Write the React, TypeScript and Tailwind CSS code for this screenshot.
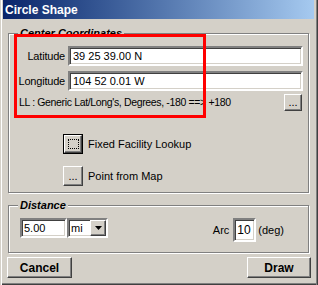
import React from 'react';

const font = { fontFamily: '"Liberation Sans", Arial, sans-serif' };

const sunken =
    'bg-white border-2 border-t-[#808080] border-l-[#808080] border-r-white border-b-white shadow-[inset_1px_1px_0_#404040,inset_-1px_-1px_0_#d4d0c8]';

const raised =
    'bg-[#d4d0c8] border border-t-white border-l-white border-r-[#404040] border-b-[#404040] shadow-[inset_-1px_-1px_0_#808080]';

const GroupBox: React.FC<{ title: string; className?: string; children: React.ReactNode }> = ({ title, className, children }) => (
    <div className={`relative border border-[#808080] shadow-[inset_1px_1px_0_#ffffff,1px_1px_0_#ffffff] ${className ?? ''}`}>
        <span className="absolute -top-[8px] left-[9px] px-[2px] bg-[#d4d0c8] text-[11px] font-bold italic leading-[14px] text-black">
            {title}
        </span>
        {children}
    </div>
);

export default function App() {
    return (
        <div
            style={font}
            className="relative w-[318px] h-[285px] bg-[#d4d0c8] flex flex-col pl-[3px] pr-[4px] pb-[4px] text-[11px] text-black shadow-[inset_1px_0_0_#d4d0c8,inset_2px_0_0_#ffffff,inset_-1px_0_0_#404040,inset_-2px_0_0_#808080,inset_0_-1px_0_#404040,inset_0_-2px_0_#808080]"
        >
            {/* Title bar */}
            <div className="h-[19px] shrink-0 flex items-center pl-[2px] bg-gradient-to-r from-[#0a246a] to-[#a6caf0]">
                <span className="text-white font-bold text-[12px] leading-none">Circle Shape</span>
            </div>

            {/* Center Coordinates */}
            <GroupBox title="Center Coordinates" className="mt-[14px] ml-[5px] w-[301px] h-[160px] shrink-0 pl-[6px] pt-[12px]">
                <div className="flex items-center h-[20px]">
                    <span className="w-[50px] text-right tracking-[-0.2px]">Latitude</span>
                    <div className={`ml-[3px] w-[235px] h-[20px] ${sunken} flex items-center pl-[3px]`}>39 25 39.00 N</div>
                </div>
                <div className="flex items-center h-[20px] mt-[5px]">
                    <span className="w-[50px] text-right tracking-[-0.2px]">Longitude</span>
                    <div className={`ml-[3px] w-[235px] h-[20px] ${sunken} flex items-center pl-[3px]`}>104 52 0.01 W</div>
                </div>
                <div className="flex items-center h-[17px] mt-[3px] pl-[4px]">
                    <span className="text-[10.5px] tracking-[-0.35px]">LL : Generic Lat/Long's, Degrees, -180 ==&gt; +180</span>
                    <div className={`ml-auto mr-[6px] w-[18px] h-[17px] ${raised} flex items-end justify-center leading-[12px] pb-[2px]`}>...</div>
                </div>
                <div className="flex items-center h-[20px] mt-[23px] pl-[48px]">
                    <div className="w-[20px] h-[20px] border border-black flex">
                        <div className={`flex-1 ${raised} flex items-center justify-center`}>
                            <div className="w-[11px] h-[10px] border border-dotted border-black" />
                        </div>
                    </div>
                    <span className="ml-[5px]">Fixed Facility Lookup</span>
                </div>
                <div className="flex items-center h-[20px] mt-[12px] pl-[48px]">
                    <div className={`w-[20px] h-[20px] ${raised} flex items-end justify-center leading-[12px] pb-[3px]`}>...</div>
                    <span className="ml-[5px]">Point from Map</span>
                </div>
            </GroupBox>

            {/* Distance */}
            <GroupBox title="Distance" className="mt-[12px] ml-[5px] w-[301px] h-[48px] shrink-0 pl-[11px] pt-[12px] pr-[24px]">
                <div className="flex items-start">
                    <div className={`w-[47px] h-[20px] ${sunken} flex items-center pl-[2px]`}>5.00</div>
                    <div className={`w-[41px] h-[20px] ${sunken} flex items-center pl-[2px]`}>
                        <span className="flex-1">mi</span>
                        <div className={`w-[16px] h-[16px] ${raised} flex items-center justify-center`}>
                            <svg width="7" height="4" viewBox="0 0 7 4">
                                <path d="M0 0h7L3.5 4z" fill="#000" />
                            </svg>
                        </div>
                    </div>
                    <div className="ml-auto flex items-center h-[24px]">
                        <span>Arc</span>
                        <div className={`ml-[4px] w-[23px] h-[24px] ${sunken} flex items-start pl-[2px] pt-[1px] text-[12px]`}>10</div>
                        <span className="ml-[2px]">(deg)</span>
                    </div>
                </div>
            </GroupBox>

            {/* Buttons */}
            <div className="mt-[4px] flex items-center justify-between pl-[4px] pr-[3px]">
                <div className={`w-[65px] h-[21px] ${raised} flex items-center justify-center font-bold text-[12px]`}>Cancel</div>
                <div className={`w-[64px] h-[21px] ${raised} flex items-center justify-center font-bold text-[12px]`}>Draw</div>
            </div>

            {/* Red highlight annotation */}
            <div className="absolute left-[14px] top-[34px] w-[192px] h-[84px] border-[3px] border-[#ff0000] pointer-events-none" />
        </div>
    );
}
